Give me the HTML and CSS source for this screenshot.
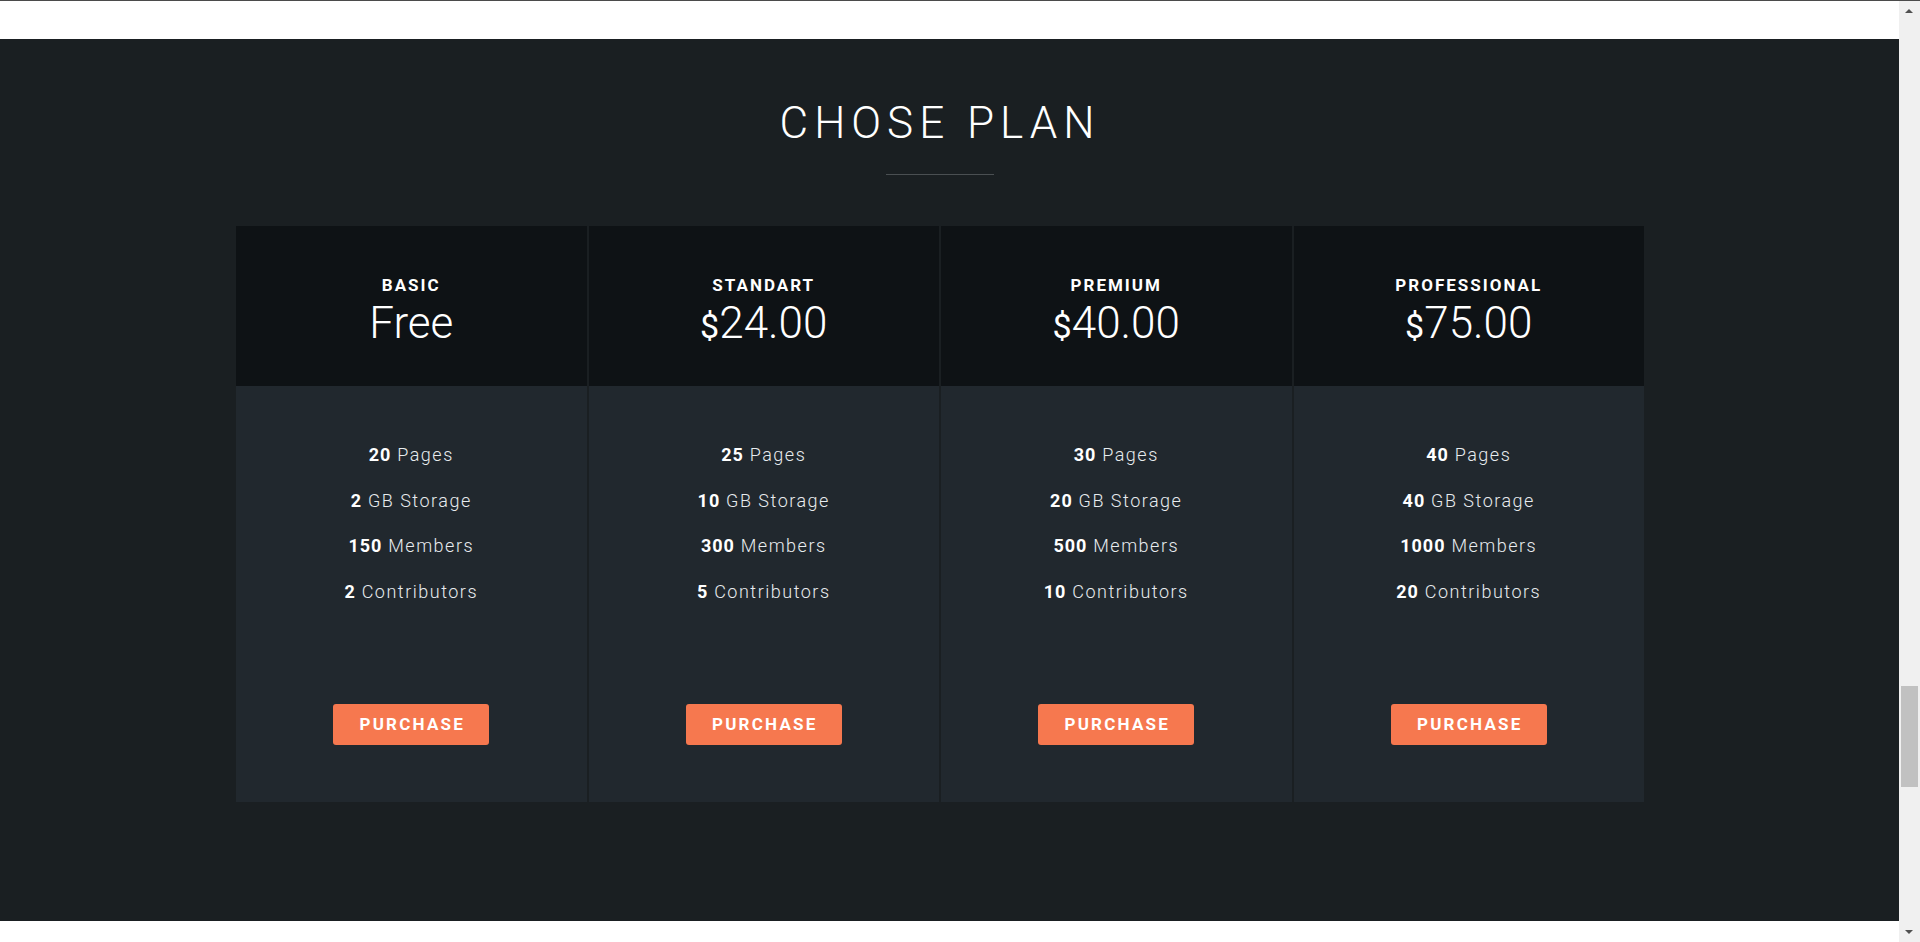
FILE: index.html
```html
<!DOCTYPE html>
<html lang="en">
<head>
<meta charset="utf-8">
<title>Chose Plan</title>
<link rel="stylesheet" href="styles.css">
</head>
<body>
<div class="window">
  <div class="topline"></div>
  <div class="viewport">
    <main class="page">
      <div class="spacer-top"></div>
      <section class="pricing">
        <h2 class="title">CHOSE PLAN</h2>
        <div class="title-rule"></div>
        <div class="plans">
          <div class="plan">
            <div class="plan-head">
              <div class="plan-name">BASIC</div>
              <div class="plan-price">Free</div>
            </div>
            <div class="plan-body">
              <ul class="features">
                <li><b>20</b> Pages</li>
                <li><b>2</b> GB Storage</li>
                <li><b>150</b> Members</li>
                <li><b>2</b> Contributors</li>
              </ul>
              <a class="btn" href="#">PURCHASE</a>
            </div>
          </div>
          <div class="plan">
            <div class="plan-head">
              <div class="plan-name">STANDART</div>
              <div class="plan-price"><span class="cur">$</span>24.00</div>
            </div>
            <div class="plan-body">
              <ul class="features">
                <li><b>25</b> Pages</li>
                <li><b>10</b> GB Storage</li>
                <li><b>300</b> Members</li>
                <li><b>5</b> Contributors</li>
              </ul>
              <a class="btn" href="#">PURCHASE</a>
            </div>
          </div>
          <div class="plan">
            <div class="plan-head">
              <div class="plan-name">PREMIUM</div>
              <div class="plan-price"><span class="cur">$</span>40.00</div>
            </div>
            <div class="plan-body">
              <ul class="features">
                <li><b>30</b> Pages</li>
                <li><b>20</b> GB Storage</li>
                <li><b>500</b> Members</li>
                <li><b>10</b> Contributors</li>
              </ul>
              <a class="btn" href="#">PURCHASE</a>
            </div>
          </div>
          <div class="plan">
            <div class="plan-head">
              <div class="plan-name">PROFESSIONAL</div>
              <div class="plan-price"><span class="cur">$</span>75.00</div>
            </div>
            <div class="plan-body">
              <ul class="features">
                <li><b>40</b> Pages</li>
                <li><b>40</b> GB Storage</li>
                <li><b>1000</b> Members</li>
                <li><b>20</b> Contributors</li>
              </ul>
              <a class="btn" href="#">PURCHASE</a>
            </div>
          </div>
        </div>
      </section>
      <div class="spacer-bottom"></div>
    </main>
    <div class="scrollbar">
      <div class="arrow-up"></div>
      <div class="track"><div class="thumb"></div></div>
      <div class="arrow-down"></div>
    </div>
  </div>
</div>
</body>
</html>
```
FILE: styles.css
```css
* { box-sizing: border-box; }
html, body { margin: 0; padding: 0; height: 100%; overflow: hidden; }
body { font-family: Roboto, "Liberation Sans", sans-serif; background: #fff; }

.window { display: flex; flex-direction: column; height: 942px; }
.topline { height: 1px; background: #4b4b4b; flex: none; }
.viewport { display: flex; flex: 1; min-height: 0; }

.page { flex: 1; display: flex; flex-direction: column; background: #fff; }
.spacer-top { height: 38px; flex: none; }
.spacer-bottom { height: 21px; flex: none; }

.pricing {
  height: 882px;
  flex: none;
  background: #1a1f22;
  padding: 62px 19px 0 0;
  display: flex;
  flex-direction: column;
  align-items: center;
}

.title {
  margin: 0;
  font-family: Roboto, sans-serif;
  font-weight: 300;
  font-size: 44px;
  line-height: 44px;
  letter-spacing: 6px;
  color: #fff;
}
.title-rule {
  width: 108px;
  height: 1px;
  background: #4a4f52;
  margin-top: 29px;
}

.plans {
  margin-top: 51px;
  width: 1408px;
  display: grid;
  grid-template-columns: repeat(4, 1fr);
  column-gap: 2px;
}

.plan { display: flex; flex-direction: column; }

.plan-head {
  background: #0e1215;
  text-align: center;
  padding: 49px 0 41px;
  color: #fff;
}
.plan-name {
  font-size: 17px;
  line-height: 20px;
  font-weight: 700;
  letter-spacing: 2px;
}
.plan-price {
  margin-top: 6px;
  font-size: 44px;
  line-height: 44px;
  font-weight: 300;
}
.cur {
  font-size: 34px;
  line-height: 1;
  font-weight: 400;
}

.plan-body {
  background: #21282e;
  padding: 46px 0 57px;
  display: flex;
  flex-direction: column;
  align-items: center;
  height: 416px;
}
.features {
  list-style: none;
  margin: 0;
  padding: 0;
  text-align: center;
}
.features li {
  font-size: 18px;
  line-height: 45.7px;
  font-weight: 300;
  letter-spacing: 1.5px;
  color: #e8ecef;
}
.features b { font-weight: 700; color: #fff; letter-spacing: 1px; }

.btn {
  margin-top: auto;
  width: 156px;
  height: 41px;
  line-height: 41px;
  background: #f6784f;
  border-radius: 3px;
  color: #fff;
  text-align: center;
  text-decoration: none;
  font-size: 17px;
  font-weight: 700;
  letter-spacing: 2.2px;
  padding-left: 2px;
}

.scrollbar {
  width: 21px;
  flex: none;
  background: #f0f0f0;
  display: flex;
  flex-direction: column;
  align-items: center;
}
.arrow-up, .arrow-down { height: 20px; width: 100%; position: relative; flex: none; }
.arrow-up::after, .arrow-down::after {
  content: "";
  position: absolute;
  left: 6px;
  width: 0; height: 0;
  border-left: 4px solid transparent;
  border-right: 4px solid transparent;
}
.arrow-up::after { top: 8px; border-bottom: 4px solid #505050; }
.arrow-down::after { top: 8px; border-top: 4px solid #505050; }
.track { flex: 1; width: 100%; padding: 0 2px; }
.thumb { margin-top: 665px; height: 101px; background: #c1c1c1; }
```
